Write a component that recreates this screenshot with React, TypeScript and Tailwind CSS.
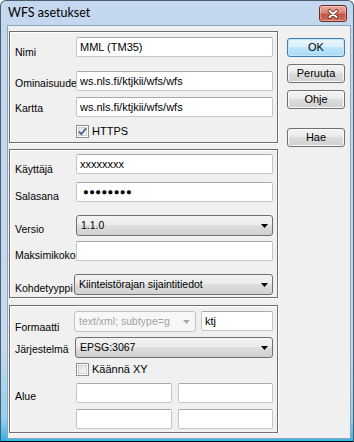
import React from "react";

const font = { fontFamily: "'Liberation Sans', Arial, sans-serif" };

function TextBox({ value = "", className = "" }: { value?: React.ReactNode; className?: string }) {
  return (
    <div
      className={`h-[20px] min-w-0 flex items-center pl-[3px] rounded-[2px] border border-[#c6c6c6] border-t-[#a9a9a9] bg-white text-[11px] text-black whitespace-nowrap overflow-hidden ${className}`}
    >
      {value}
    </div>
  );
}

function Arrow({ color = "#000" }: { color?: string }) {
  return (
    <svg width="7" height="4" viewBox="0 0 7 4" className="shrink-0">
      <polygon points="0,0 7,0 3.5,4" fill={color} />
    </svg>
  );
}

function Combo({ value, className = "" }: { value: string; className?: string }) {
  return (
    <div
      className={`h-[21px] min-w-0 flex items-center pl-[4px] pr-[4px] rounded-[3px] border border-[#707070] bg-[linear-gradient(#f3f3f3,#ececec_45%,#dedede_50%,#d0d0d0)] text-[10.5px] text-black ${className}`}
    >
      <span className="flex-1 truncate">{value}</span>
      <Arrow />
    </div>
  );
}

function CheckBox({ checked = false, label }: { checked?: boolean; label: string }) {
  return (
    <div className="flex items-center h-[13px] gap-[3px]">
      <span className="relative w-[13px] h-[13px] shrink-0 border border-[#8e8f8f] bg-white p-[1px]">
        <span className="block w-full h-full border border-[#cfcfcf] bg-[linear-gradient(135deg,#e0e0e0,#fafafa)]" />
        {checked && (
          <svg width="11" height="11" viewBox="0 0 11 11" className="absolute left-0 top-0">
            <path d="M2 5.6 L4.4 8.2 L9 2.2" fill="none" stroke="#4b5f91" strokeWidth="1.8" />
          </svg>
        )}
      </span>
      <span className="text-[11px] leading-[13px] text-black">{label}</span>
    </div>
  );
}

function Label({ children, className = "pt-[8px]" }: { children: React.ReactNode; className?: string }) {
  return (
    <div className={`w-[61px] shrink-0 text-[10.5px] leading-[12px] text-black whitespace-nowrap overflow-hidden ${className}`}>
      {children}
    </div>
  );
}

function Button({ children, primary = false }: { children: React.ReactNode; primary?: boolean }) {
  return (
    <div
      className={`h-[19px] flex items-center justify-center rounded-[3px] border text-[11px] text-black ${
        primary
          ? "border-[#3c7fb1] bg-[linear-gradient(#eaf6fd,#d9f0fc_45%,#bee6fd_50%,#a7d9f5)] shadow-[inset_0_0_0_1px_#c6e6f8]"
          : "border-[#707070] bg-[linear-gradient(#f2f2f2,#ebebeb_45%,#dddddd_50%,#cfcfcf)] shadow-[inset_0_0_0_1px_#fafafa]"
      }`}
    >
      {children}
    </div>
  );
}

function GroupBox({ children, className = "" }: { children: React.ReactNode; className?: string }) {
  return (
    <div
      className={`flex flex-col pl-[5px] pr-[4px] border border-[#6f6f6f] shadow-[1px_1px_0_#ffffff,inset_1px_1px_0_#ffffff] ${className}`}
    >
      {children}
    </div>
  );
}

export default function App() {
  return (
    <div
      className="w-[354px] h-[442px] flex flex-col border-t border-l border-r border-b border-[#4e5c70] border-b-black rounded-t-[6px] bg-[linear-gradient(#c3d7ee,#c4d8ef_80%,#8fd0ef_95%,#33b4e6)] overflow-hidden"
      style={font}
    >
      <div className="h-[24px] shrink-0 flex items-center justify-between pl-[7px] pr-[6px]">
        <span className="text-[12.5px] text-black" style={{ fontFamily: "Lato, 'Liberation Sans', sans-serif" }}>
          WFS asetukset
        </span>
        <div className="mt-[1px] w-[28px] h-[17px] flex items-center justify-center rounded-[3px] border border-[#6b2c24] bg-[linear-gradient(#eaaa9e,#d98576_45%,#c8503f_55%,#d4715d)] shadow-[inset_0_0_0_1px_rgba(255,255,255,0.35)]">
          <svg width="12" height="10" viewBox="0 0 12 10">
            <path d="M2.5 2 L9.5 8 M9.5 2 L2.5 8" stroke="#5b2720" strokeWidth="3.6" strokeLinecap="round" />
            <path d="M2.5 2 L9.5 8 M9.5 2 L2.5 8" stroke="#ffffff" strokeWidth="2" strokeLinecap="round" />
          </svg>
        </div>
      </div>

      <div className="flex-1 ml-[6px] mr-[2px] mb-[2px] border border-[#8ea4bf] bg-[#f0f0f0] flex pt-[5px] pl-[1px] pb-[5px]">
        <div className="w-[269px] flex flex-col">
          <GroupBox className="h-[112px] pt-[5px]">
            <div className="flex items-start h-[20px]">
              <Label className="pt-[9px]">Nimi</Label>
              <TextBox className="flex-1" value="MML (TM35)" />
            </div>
            <div className="flex items-start h-[20px] mt-[14px]">
              <Label className="pt-[6px]">Ominaisuudet</Label>
              <TextBox className="flex-1" value="ws.nls.fi/ktjkii/wfs/wfs" />
            </div>
            <div className="flex items-start h-[20px] mt-[6px]">
              <Label className="pt-[5px]">Kartta</Label>
              <TextBox className="flex-1" value="ws.nls.fi/ktjkii/wfs/wfs" />
            </div>
            <div className="mt-[8px] pl-[61px]">
              <CheckBox checked label="HTTPS" />
            </div>
          </GroupBox>

          <GroupBox className="h-[149px] mt-[6px] pt-[4px]">
            <div className="flex items-start h-[20px]">
              <Label className="pt-[9px]">Käyttäjä</Label>
              <TextBox className="flex-1" value="xxxxxxxx" />
            </div>
            <div className="flex items-start h-[20px] mt-[8px]">
              <Label className="pt-[8px]">Salasana</Label>
              <TextBox
                className="flex-1"
                value={<span className="pl-[3px] text-[9.5px] tracking-[0.4px]">●●●●●●●●</span>}
              />
            </div>
            <div className="flex items-start h-[21px] mt-[13px]">
              <Label className="pt-[8px]">Versio</Label>
              <Combo className="flex-1" value="1.1.0" />
            </div>
            <div className="flex items-start h-[20px] mt-[5px]">
              <Label className="pt-[8px]">Maksimikoko</Label>
              <TextBox className="flex-1" />
            </div>
            <div className="flex items-start h-[21px] mt-[13px]">
              <Label className="pt-[8px]">Kohdetyyppi</Label>
              <Combo className="flex-1 -ml-[2px]" value="Kiinteistörajan sijaintitiedot" />
            </div>
          </GroupBox>

          <GroupBox className="h-[128px] mt-[7px] pt-[5px]">
            <div className="flex items-start h-[21px]">
              <Label className="pt-[10px]">Formaatti</Label>
              <div className="-ml-[2px] w-[122px] h-[21px] flex items-center pl-[4px] pr-[5px] rounded-[3px] border border-[#c2c2c2] bg-[#f7f7f7] text-[10.5px] text-[#a2a2a2]">
                <span className="flex-1 overflow-hidden whitespace-nowrap">text/xml; subtype=g</span>
                <span className="ml-[4px]">
                  <Arrow color="#a8a8a8" />
                </span>
              </div>
              <TextBox className="flex-1 ml-[5px]" value="ktj" />
            </div>
            <div className="flex items-start h-[21px] mt-[5px]">
              <Label className="pt-[6px]">Järjestelmä</Label>
              <Combo className="flex-1 -ml-[1px]" value="EPSG:3067" />
            </div>
            <div className="mt-[5px] pl-[61px]">
              <CheckBox label="Käännä XY" />
            </div>
            <div className="flex items-start mt-[7px]">
              <Label className="pt-[7px]">Alue</Label>
              <div className="flex-1 grid grid-cols-2 gap-x-[6px] gap-y-[6px]">
                <TextBox />
                <TextBox />
                <TextBox />
                <TextBox />
              </div>
            </div>
          </GroupBox>
        </div>

        <div className="w-[58px] ml-[9px] flex flex-col pt-[7px]">
          <Button primary>OK</Button>
          <div className="mt-[7px]">
            <Button>Peruuta</Button>
          </div>
          <div className="mt-[7px]">
            <Button>Ohje</Button>
          </div>
          <div className="mt-[19px]">
            <Button>Hae</Button>
          </div>
        </div>
      </div>
    </div>
  );
}
